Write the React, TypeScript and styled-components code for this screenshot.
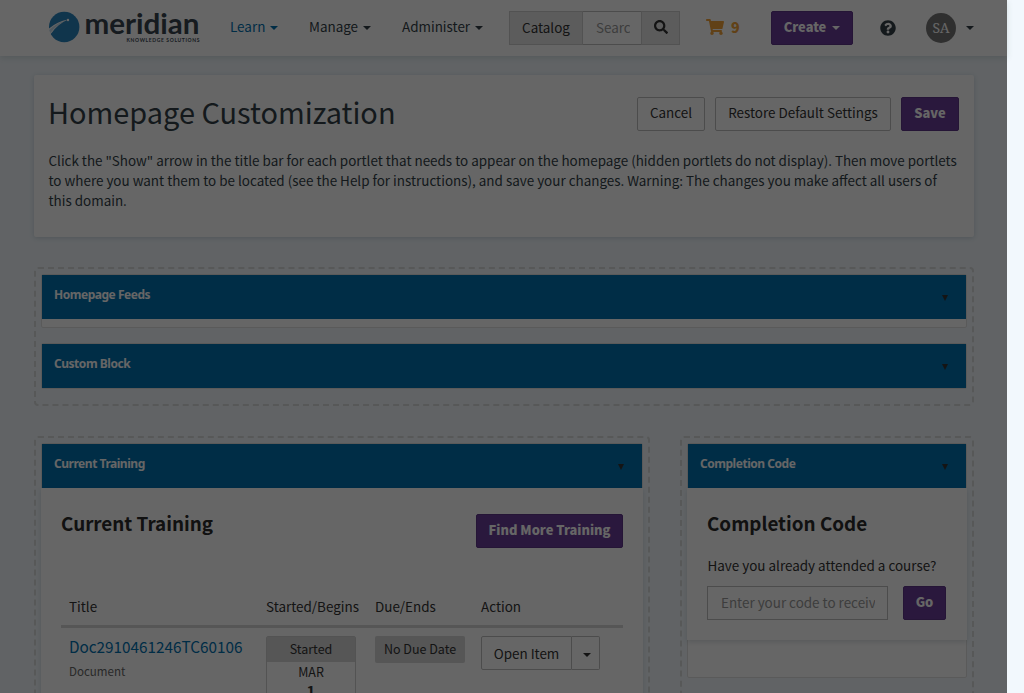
import React from "react";
import styled, { createGlobalStyle, css } from "styled-components";
import { FaShoppingCart, FaQuestionCircle, FaSearch } from "react-icons/fa";

const GlobalStyle = createGlobalStyle`
  * { box-sizing: border-box; }
  html, body { margin: 0; padding: 0; overflow: hidden; background: #f2f8fd; }
  body {
    font-family: "Noto Sans CJK SC", "Noto Sans", sans-serif;
    font-size: 13.44px;
    line-height: 20px;
    color: #333f48;
  }
  h1, h2, p { margin: 0; }
  button, input { font: inherit; color: inherit; margin: 0; }
`;

const Screen = styled.div`
  position: relative;
  width: 1024px;
  height: 693px;
  overflow: hidden;
`;

const Page = styled.div`
  width: 1007px;
`;

const Backdrop = styled.div`
  position: absolute;
  top: 0;
  left: 0;
  width: 1007px;
  height: 100%;
  background: rgba(0, 0, 0, 0.6);
`;

const Header = styled.header`
  display: grid;
  grid-template-columns: 181px 79px 93px 107px 197px 65px 109px 46px 48px;
  align-items: center;
  height: 56px;
  padding-left: 49px;
  background: #fff;
  box-shadow: 0 2px 6px rgba(60, 100, 90, 0.16);
`;

const Logo = styled.svg`
  display: block;
  width: 152px;
  height: 56px;
`;

const NavLink = styled.a<{ $active?: boolean }>`
  display: flex;
  align-items: center;
  gap: 5px;
  padding-bottom: 4px;
  color: ${(p) => (p.$active ? "#0071b0" : "#333f48")};
`;

const Caret = styled.span`
  width: 0;
  height: 0;
  margin-top: 3px;
  border: 4px solid transparent;
  border-top-color: currentColor;
  border-bottom: 0;
`;

const SearchGroup = styled.div`
  display: flex;
  width: 171px;
  height: 34px;
`;

const SearchAddon = styled.button<{ $width: number }>`
  display: flex;
  align-items: center;
  justify-content: center;
  width: ${(p) => p.$width}px;
  padding: 0 0 3px;
  border: 1px solid #ccc;
  background: #e6e6e6;
  color: #333;
`;

const Field = styled.input<{ $width: number }>`
  width: ${(p) => p.$width}px;
  height: 34px;
  padding: 0 12px 2px 13px;
  border: 1px solid #bfbfbf;
  border-radius: 0;
  background: #fff;
  &::placeholder { color: #999; opacity: 1; }
`;

const SearchField = styled(Field)`
  padding-right: 11px;
  padding-bottom: 3px;
  border-width: 1px 0;
`;

const Cart = styled.div`
  display: flex;
  align-items: center;
  gap: 7px;
  padding-bottom: 3px;
  color: #f2a33a;
  font-size: 14.3px;
  font-weight: 900;
`;

const buttonKinds = {
  primary: css`
    background: #693c98;
    border-color: #5d3587;
    color: #fff;
    font-size: 12.9px;
    font-weight: 900;
  `,
  plain: css`
    background: #fff;
    border-color: #bfbfbf;
    color: #333;
  `,
};

const Button = styled.button<{ $kind: keyof typeof buttonKinds; $width: number }>`
  display: flex;
  align-items: center;
  justify-content: center;
  gap: 6px;
  width: ${(p) => p.$width}px;
  height: 34px;
  padding: 0 0 ${(p) => (p.$kind === "plain" ? 4 : 3)}px;
  border: 1px solid;
  border-radius: 2px;
  white-space: nowrap;
  ${(p) => buttonKinds[p.$kind]}
`;

const Account = styled.div`
  display: flex;
  align-items: center;
  gap: 10px;
`;

const AccountCaret = styled(Caret)`
  margin-top: 0;
`;

const Avatar = styled.span`
  width: 30px;
  height: 30px;
  border-radius: 50%;
  background: #777;
  color: #fff;
  font: 14px/30px "Noto Serif", "Liberation Serif", serif;
  text-align: center;
`;

const Main = styled.main`
  width: 940px;
  margin: 19px 0 0 34px;
`;

const IntroCard = styled.section`
  height: 162px;
  padding: 22px 15px 0;
  border-radius: 2px;
  background: #fff;
  box-shadow: 0 1px 5px rgba(40, 80, 90, 0.2);
`;

const IntroTop = styled.div`
  display: flex;
  justify-content: space-between;
  height: 34px;
  margin-bottom: 19px;
`;

const PageTitle = styled.h1`
  margin-left: -1px;
  font-size: 28.92px;
  line-height: 28px;
  font-weight: 400;
  white-space: nowrap;
`;

const ButtonRow = styled.div`
  display: flex;
  gap: 10px;
`;

const IntroText = styled.p`
  margin-left: -0.5px;
  white-space: pre;
`;

const Zone = styled.section`
  padding: 5px 5px 0;
  border: 2px dashed #d9dbdc;
  border-radius: 4px;
`;

const TopZone = styled(Zone)`
  margin: 30px 0;
`;

const Columns = styled.div`
  display: grid;
  grid-template-columns: 616px 294px;
  gap: 30px;
`;

const ColumnZone = styled(Zone)`
  height: 300px;
`;

const PortletFrame = styled.article`
  margin-bottom: 15px;
  border: 1px solid #e2e2e2;
  border-radius: 2px;
  background: #fff;
`;

const PortletBar = styled.header`
  display: flex;
  justify-content: space-between;
  height: 44px;
  padding: 12px 18px 0 12px;
  background: #0071b0;
  color: #fff;
  font: 700 12px/16px "Noto Sans", sans-serif;
  letter-spacing: -0.47px;
`;

const ToggleArrow = styled.span`
  width: 0;
  height: 0;
  margin-top: 8px;
  border: 3.5px solid transparent;
  border-top: 6px solid #333;
  border-bottom: 0;
`;

const EmptyBody = styled.div`
  height: 8px;
`;

const Widget = styled.div`
  margin: 0 -1px;
  padding: 26px 20px 0;
  background: #fff;
  box-shadow: 0 2px 5px rgba(40, 60, 80, 0.16);
`;

const TrainingWidget = styled(Widget)`
  height: 240px;
`;

const CodeWidget = styled(Widget)`
  height: 152px;
  margin-bottom: 37px;
`;

const WidgetTop = styled.div`
  display: flex;
  justify-content: space-between;
  height: 34px;
`;

const WidgetTitle = styled.h2`
  color: #2b2b2b;
  font-size: 18.85px;
  line-height: 18px;
  font-weight: 700;
  white-space: nowrap;
`;

const trainingGrid = css`
  display: grid;
  grid-template-columns: 197px 109px 106px 142px;
  padding-left: 8px;
  color: #333;
`;

const TableHead = styled.div`
  ${trainingGrid}
  height: 80px;
  padding-top: 48px;
  border-bottom: 3px solid #d6d6d6;
`;

const TableRow = styled.div`
  ${trainingGrid}
  padding-top: 8px;
`;

const ItemLink = styled.a`
  display: block;
  color: #0071b0;
  font-size: 15.3px;
  line-height: 21px;
`;

const ItemType = styled.div`
  margin-top: 4px;
  color: #666;
  font-size: 11.55px;
`;

const DateCard = styled.div`
  width: 90px;
  height: 80px;
  border: 1px solid #d0d0d0;
  border-radius: 2px;
  font-size: 12.5px;
  text-align: center;
`;

const DateLabel = styled.div`
  height: 25px;
  background: #d6d6d6;
  line-height: 24px;
`;

const DateDay = styled.div`
  font-size: 15px;
  font-weight: 700;
  line-height: 18px;
`;

const Tag = styled.div`
  width: 90px;
  height: 27px;
  border-radius: 2px;
  background: #d6d6d6;
  font-size: 12.5px;
  line-height: 26px;
  text-align: center;
`;

const SplitButton = styled.div`
  display: flex;
`;

const SplitMain = styled(Button)`
  padding-bottom: 1px;
  border-radius: 2px 0 0 2px;
`;

const SplitToggle = styled(Button)`
  padding: 0 0 0 3px;
  border-left: 0;
  border-radius: 0 2px 2px 0;
`;

const CodeLabel = styled.label`
  display: block;
  margin: 23px 0 11px 0.5px;
  color: #333;
`;

const CodeForm = styled.div`
  display: flex;
  gap: 15px;
`;

function MeridianLogo() {
  return (
    <Logo viewBox="49 0 152 56" aria-label="meridian knowledge solutions">
      <circle cx="64.2" cy="27" r="15.2" fill="#2a84be" />
      <path d="M48.5 29 Q57 21.500 68 19.500 Q58 24 52 32.500 L48.500 36Z" fill="#fff" />
      <path d="M49.100 30 Q57 22.500 66 20.700 Q57 24 50.400 33 Q49.300 31 49.100 30Z" fill="#5f9dc8" opacity="0.35" />
      <circle cx="68" cy="20" r="1.2" fill="#fff" />
      <text x="84.500" y="34" fontFamily="Lato" fontWeight="700" fontSize="28" fill="#37444f" textLength="115" lengthAdjust="spacingAndGlyphs">
        meridian
      </text>
      <text x="126.500" y="41.700" fontFamily="Lato" fontWeight="700" fontSize="5" fill="#3c4a55" textLength="73">
        KNOWLEDGE SOLUTIONS
      </text>
    </Logo>
  );
}

function Portlet({ title, children }: { title: string; children?: React.ReactNode }) {
  return (
    <PortletFrame>
      <PortletBar>
        <span>{title}</span>
        <ToggleArrow />
      </PortletBar>
      {children}
    </PortletFrame>
  );
}

const introLines = [
  'Click the "Show" arrow in the title bar for each portlet that needs to appear on the homepage (hidden portlets do not display). Then move portlets',
  "to where you want them to be located (see the Help for instructions), and save your changes. Warning: The changes you make affect all users of",
  "this domain.",
];

export default function App() {
  return (
    <Screen>
      <GlobalStyle />
      <Page>
        <Header>
          <MeridianLogo />
          <NavLink $active>Learn <Caret /></NavLink>
          <NavLink>Manage <Caret /></NavLink>
          <NavLink>Administer <Caret /></NavLink>
          <SearchGroup>
            <SearchAddon $width={74}>Catalog</SearchAddon>
            <SearchField $width={58} placeholder="Search" />
            <SearchAddon $width={39} aria-label="Search"><FaSearch size={14} /></SearchAddon>
          </SearchGroup>
          <Cart><FaShoppingCart size={18} /> 9</Cart>
          <Button $kind="primary" $width={82}>Create <Caret /></Button>
          <FaQuestionCircle size={16} />
          <Account><Avatar>SA</Avatar><AccountCaret /></Account>
        </Header>
        <Main>
          <IntroCard>
            <IntroTop>
              <PageTitle>Homepage Customization</PageTitle>
              <ButtonRow>
                <Button $kind="plain" $width={68}>Cancel</Button>
                <Button $kind="plain" $width={176}>Restore Default Settings</Button>
                <Button $kind="primary" $width={58}>Save</Button>
              </ButtonRow>
            </IntroTop>
            <IntroText>{introLines.join("\n")}</IntroText>
          </IntroCard>
          <TopZone>
            <Portlet title="Homepage Feeds"><EmptyBody /></Portlet>
            <Portlet title="Custom Block" />
          </TopZone>
          <Columns>
            <ColumnZone>
              <Portlet title="Current Training">
                <TrainingWidget>
                  <WidgetTop>
                    <WidgetTitle>Current Training</WidgetTitle>
                    <Button $kind="primary" $width={147}>Find More Training</Button>
                  </WidgetTop>
                  <TableHead>
                    <span>Title</span>
                    <span>Started/Begins</span>
                    <span>Due/Ends</span>
                    <span>Action</span>
                  </TableHead>
                  <TableRow>
                    <div>
                      <ItemLink>Doc2910461246TC60106</ItemLink>
                      <ItemType>Document</ItemType>
                    </div>
                    <DateCard>
                      <DateLabel>Started</DateLabel>
                      <div>MAR</div>
                      <DateDay>1</DateDay>
                    </DateCard>
                    <Tag>No Due Date</Tag>
                    <SplitButton>
                      <SplitMain $kind="plain" $width={91}>Open Item</SplitMain>
                      <SplitToggle $kind="plain" $width={28} aria-label="More"><Caret /></SplitToggle>
                    </SplitButton>
                  </TableRow>
                </TrainingWidget>
              </Portlet>
            </ColumnZone>
            <ColumnZone>
              <Portlet title="Completion Code">
                <CodeWidget>
                  <WidgetTitle>Completion Code</WidgetTitle>
                  <CodeLabel>Have you already attended a course?</CodeLabel>
                  <CodeForm>
                    <Field $width={181} placeholder="Enter your code to receive credit" />
                    <Button $kind="primary" $width={43}>Go</Button>
                  </CodeForm>
                </CodeWidget>
              </Portlet>
            </ColumnZone>
          </Columns>
        </Main>
      </Page>
      <Backdrop />
    </Screen>
  );
}
